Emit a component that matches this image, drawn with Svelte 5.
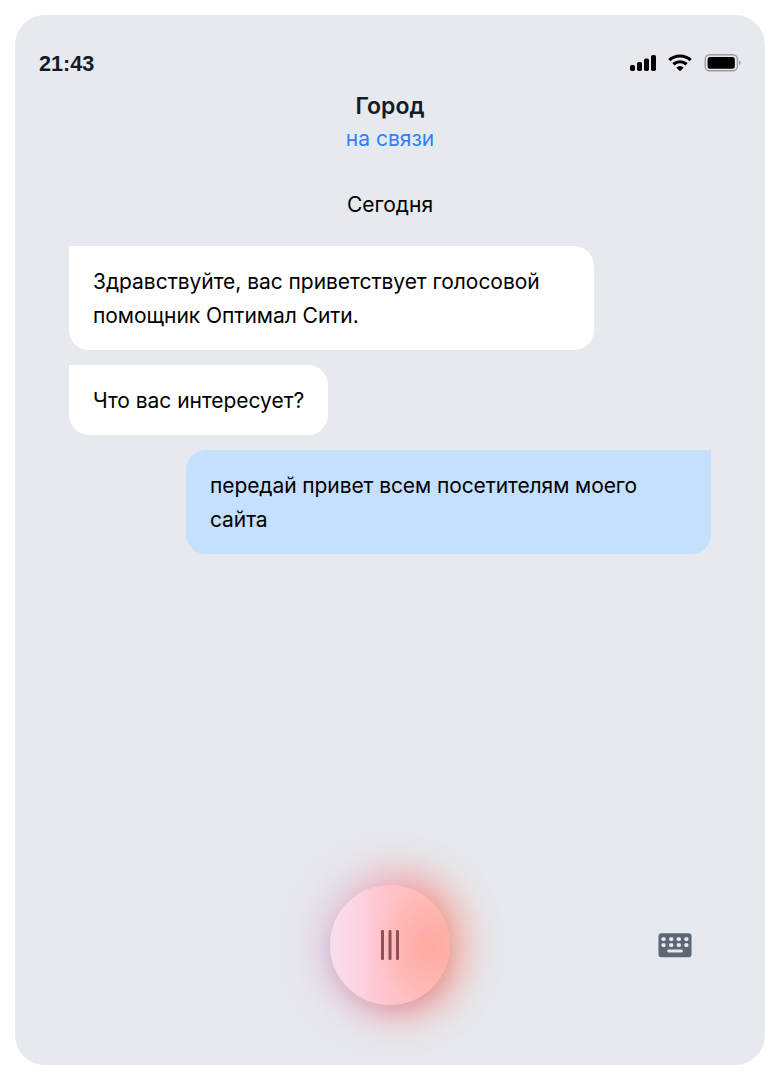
<script>
  const messages = [
    { lines: ['Здравствуйте, вас приветствует голосовой', 'помощник Оптимал Сити.'], kind: 'wide' },
    { lines: ['Что вас интересует?'], kind: 'short' },
    { lines: ['передай привет всем посетителям моего', 'сайта'], kind: 'wide own' }
  ];
  const keys = [5.3, 13, 20.6, 28.2];
</script>

<main class="phone">
  <div class="status">
    <span class="time">21:43</span>
    <div class="indicators">
      <svg class="signal" width="26" height="18" viewBox="0 0 26 18">
        <rect x="0" y="11" width="5" height="6" rx="1.8" />
        <rect x="7" y="8" width="5" height="9" rx="1.8" />
        <rect x="14" y="4.5" width="5" height="12.5" rx="1.8" />
        <rect x="21" y="1" width="5" height="16" rx="1.8" />
      </svg>
      <svg class="wifi" width="24" height="18" viewBox="0 0 24 18">
        <path d="M1.3 6.2C7.2.6 16.8.6 22.7 6.2M5.4 10.3c3.8-3.4 9.4-3.4 13.2 0" fill="none" stroke="#000" stroke-width="3.2" />
        <path d="M8.3 13.4q3.7-3 7.4 0L12 17.2z" />
      </svg>
      <svg class="battery" width="37" height="18" viewBox="0 0 37 18">
        <rect x="1.2" y=".8" width="32.2" height="16" rx="4.5" fill="none" stroke="#9b9da2" stroke-width="1.4" />
        <rect x="3.6" y="3" width="27.2" height="11.7" rx="2.5" />
        <path d="M35 6.2q3.4 2.6 0 5.2z" fill="#9b9da2" />
      </svg>
    </div>
  </div>
  <header>
    <h1>Город</h1>
    <p class="online">на связи</p>
  </header>
  <p class="day">Сегодня</p>
  <section class="chat">
    {#each messages as m}
      <div class="bubble {m.kind}">
        {#each m.lines as line}<span>{line}</span>{/each}
      </div>
    {/each}
  </section>
  <footer>
    <button class="voice" aria-label="Голос">
      <i class="halo"></i>
      <i class="glow"></i>
      <i class="disc"></i>
      <svg width="20" height="30" viewBox="0 0 20 30">
        <rect x="1" width="3" height="30" rx="1" /><rect x="8.5" width="3" height="30" rx="1" /><rect x="16" width="3" height="30" rx="1" />
      </svg>
    </button>
    <svg class="keyboard" width="34" height="25" viewBox="0 0 34 25">
      <rect x=".5" y=".2" width="33" height="24" rx="3" fill="#5f6775" />
      {#each keys as x}
        <rect x={x - 1.9} y="4.3" width="4.2" height="3.6" rx="1.4" fill="#e6e9ee" />
        <rect x={x - 1.9} y="10.3" width="4.2" height="3.6" rx="1.4" fill="#e6e9ee" />
      {/each}
      <rect x="9.3" y="16.4" width="15.4" height="3.2" rx="1.4" fill="#e6e9ee" />
    </svg>
  </footer>
</main>

<style>
  :global(body) { background: #fff; }
  .phone {
    box-sizing: border-box; width: 750px; height: 1050px; margin: 15px;
    border-radius: 30px; background: #e6e9ee; color: #000; overflow: hidden;
    display: flex; flex-direction: column;
    font: 21px/34px Inter, "Noto Sans", sans-serif;
  }
  .status { display: flex; justify-content: space-between; align-items: center; height: 36px; padding: 30px 24px 0; }
  .time { font: 700 21.6px/36px "Liberation Sans", sans-serif; color: #131a29; position: relative; top: 1px; }
  .indicators { display: flex; align-items: center; }
  .wifi { margin-left: 12px; }
  .battery { margin-left: 12px; }
  header { text-align: center; margin-top: 8px; }
  h1 { margin: 0; font-size: 23px; line-height: 34px; font-weight: 600; color: #131a29; }
  p { margin: 0; text-align: center; }
  .online { line-height: 32px; color: #2e7eff; }
  .day { margin-top: 33px; }
  .chat { display: flex; flex-direction: column; align-items: flex-start; gap: 15px; padding: 24px 54px 0; }
  .bubble { box-sizing: border-box; padding: 19px 24px 17px; border-radius: 0 20px 20px 20px; background: #fff; white-space: nowrap; letter-spacing: -.04px; }
  .bubble span { display: block; }
  .wide { width: 525px; }
  .short { width: 259px; }
  .own { align-self: flex-end; border-radius: 20px 0 20px 20px; background: #c5dfff; letter-spacing: -.085px; }
  footer { margin-top: auto; height: 180px; display: grid; grid-template-columns: 1fr 120px 1fr; }
  .voice { grid-column: 2; position: relative; width: 120px; height: 120px; padding: 0; border: 0; border-radius: 50%; background: none; display: grid; place-items: center; }
  .halo {
    position: absolute; inset: -66px; border-radius: 50%;
    background: radial-gradient(circle closest-side, #ef9c9c24 45%, #ef9c9c08 75%, #ef9c9c00);
  }
  .glow {
    position: absolute; inset: -12px -15px -12px -7px; border-radius: 50%; opacity: .54; filter: blur(18px);
    background: linear-gradient(90deg, #d3b4e9 5%, #eda6c4 30%, #fb7e8a 52%, #ff6550 75%, #ff8c6e 95%);
  }
  .disc {
    position: absolute; inset: 0; border-radius: 50%;
    background: radial-gradient(circle at 83% 50%, #ffaaa2 0, #ffaaa200 50%), linear-gradient(90deg, #f8dfee, #fdd2e0 25%, #ffc8d4 38%, #ffc3c7 52%, #ffbebb 75%, #ffbcb0);
    box-shadow: 0 7px 16px #8c406026;
  }
  .voice svg { position: relative; fill: #914f59; }
  .keyboard { justify-self: start; margin: 48px 0 0 208px; }
</style>
